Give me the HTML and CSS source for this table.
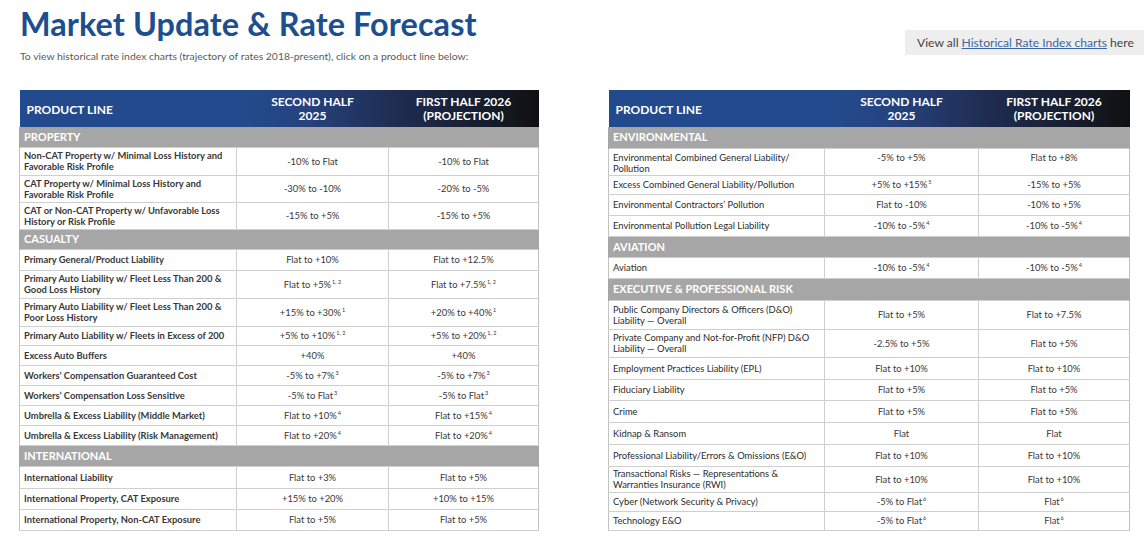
FILE: index.html
```html
<!DOCTYPE html>
<html lang="en">
<head>
<meta charset="utf-8">
<title>Market Update &amp; Rate Forecast</title>
<link rel="stylesheet" href="styles.css">
</head>
<body>
<header class="top">
  <div class="intro">
    <h1 class="title">Market Update &amp; Rate Forecast</h1>
    <p class="subtitle">To view historical rate index charts (trajectory of rates 2018-present), click on a product line below:</p>
  </div>
  <div class="hist-btn">View all&nbsp;<a class="hist-link" href="#">Historical Rate Index charts</a>&nbsp;here</div>
</header>
<main class="tables">
  <table class="rates rates-left">
    <colgroup><col class="c1"><col class="c2"><col class="c3"></colgroup>
    <thead>
      <tr class="head"><th class="th-line">PRODUCT LINE</th><th>SECOND HALF<br>2025</th><th>FIRST HALF 2026<br>(PROJECTION)</th></tr>
    </thead>
    <tbody>
      <tr class="sec h20"><td colspan="3">PROPERTY</td></tr>
      <tr class="row h28"><td>Non-CAT Property w/ Minimal Loss History and<br>Favorable Risk Profile</td><td>-10% to Flat</td><td>-10% to Flat</td></tr>
      <tr class="row h27"><td>CAT Property w/ Minimal Loss History and<br>Favorable Risk Profile</td><td>-30% to -10%</td><td>-20% to -5%</td></tr>
      <tr class="row h27"><td>CAT or Non-CAT Property w/ Unfavorable Loss<br>History or Risk Profile</td><td>-15% to +5%</td><td>-15% to +5%</td></tr>
      <tr class="sec h20"><td colspan="3">CASUALTY</td></tr>
      <tr class="row h21"><td>Primary General/Product Liability</td><td>Flat to +10%</td><td>Flat to +12.5%</td></tr>
      <tr class="row h28"><td>Primary Auto Liability w/ Fleet Less Than 200 &amp;<br>Good Loss History</td><td>Flat to +5%<sup>1, 2</sup></td><td>Flat to +7.5%<sup>1, 2</sup></td></tr>
      <tr class="row h28"><td>Primary Auto Liability w/ Fleet Less Than 200 &amp;<br>Poor Loss History</td><td>+15% to +30%<sup>1</sup></td><td>+20% to +40%<sup>1</sup></td></tr>
      <tr class="row h19"><td>Primary Auto Liability w/ Fleets in Excess of 200</td><td>+5% to +10%<sup>1, 2</sup></td><td>+5% to +20%<sup>1, 2</sup></td></tr>
      <tr class="row h20"><td>Excess Auto Buffers</td><td>+40%</td><td>+40%</td></tr>
      <tr class="row h20"><td>Workers’ Compensation Guaranteed Cost</td><td>-5% to +7%<sup>3</sup></td><td>-5% to +7%<sup>3</sup></td></tr>
      <tr class="row h20"><td>Workers’ Compensation Loss Sensitive</td><td>-5% to Flat<sup>3</sup></td><td>-5% to Flat<sup>3</sup></td></tr>
      <tr class="row h20"><td>Umbrella &amp; Excess Liability (Middle Market)</td><td>Flat to +10%<sup>4</sup></td><td>Flat to +15%<sup>4</sup></td></tr>
      <tr class="row h20"><td>Umbrella &amp; Excess Liability (Risk Management)</td><td>Flat to +20%<sup>4</sup></td><td>Flat to +20%<sup>4</sup></td></tr>
      <tr class="sec h21"><td colspan="3">INTERNATIONAL</td></tr>
      <tr class="row h22"><td>International Liability</td><td>Flat to +3%</td><td>Flat to +5%</td></tr>
      <tr class="row h21"><td>International Property, CAT Exposure</td><td>+15% to +20%</td><td>+10% to +15%</td></tr>
      <tr class="row h21"><td>International Property, Non-CAT Exposure</td><td>Flat to +5%</td><td>Flat to +5%</td></tr>
    </tbody>
  </table>

  <table class="rates rates-right">
    <colgroup><col class="c1r"><col class="c2r"><col class="c3r"></colgroup>
    <thead>
      <tr class="head"><th class="th-line">PRODUCT LINE</th><th>SECOND HALF<br>2025</th><th>FIRST HALF 2026<br>(PROJECTION)</th></tr>
    </thead>
    <tbody>
      <tr class="sec h21"><td colspan="3">ENVIRONMENTAL</td></tr>
      <tr class="row h27 top-al"><td>Environmental Combined General Liability/<br>Pollution</td><td>-5% to +5%</td><td>Flat to +8%</td></tr>
      <tr class="row h19"><td>Excess Combined General Liability/Pollution</td><td>+5% to +15%<sup>5</sup></td><td>-15% to +5%</td></tr>
      <tr class="row h21"><td>Environmental Contractors’ Pollution</td><td>Flat to -10%</td><td>-10% to +5%</td></tr>
      <tr class="row h21"><td>Environmental Pollution Legal Liability</td><td>-10% to -5%<sup>4</sup></td><td>-10% to -5%<sup>4</sup></td></tr>
      <tr class="sec h21"><td colspan="3">AVIATION</td></tr>
      <tr class="row h21"><td>Aviation</td><td>-10% to -5%<sup>4</sup></td><td>-10% to -5%<sup>4</sup></td></tr>
      <tr class="sec h22"><td colspan="3">EXECUTIVE &amp; PROFESSIONAL RISK</td></tr>
      <tr class="row h29"><td>Public Company Directors &amp; Officers (D&amp;O)<br>Liability — Overall</td><td>Flat to +5%</td><td>Flat to +7.5%</td></tr>
      <tr class="row h28"><td>Private Company and Not-for-Profit (NFP) D&amp;O<br>Liability — Overall</td><td>-2.5% to +5%</td><td>Flat to +5%</td></tr>
      <tr class="row h22"><td>Employment Practices Liability (EPL)</td><td>Flat to +10%</td><td>Flat to +10%</td></tr>
      <tr class="row h21"><td>Fiduciary Liability</td><td>Flat to +5%</td><td>Flat to +5%</td></tr>
      <tr class="row h22"><td>Crime</td><td>Flat to +5%</td><td>Flat to +5%</td></tr>
      <tr class="row h22"><td>Kidnap &amp; Ransom</td><td>Flat</td><td>Flat</td></tr>
      <tr class="row h22"><td>Professional Liability/Errors &amp; Omissions (E&amp;O)</td><td>Flat to +10%</td><td>Flat to +10%</td></tr>
      <tr class="row h26"><td>Transactional Risks — Representations &amp;<br>Warranties Insurance (RWI)</td><td>Flat to +10%</td><td>Flat to +10%</td></tr>
      <tr class="row h19"><td>Cyber (Network Security &amp; Privacy)</td><td>-5% to Flat<sup>6</sup></td><td>Flat<sup>6</sup></td></tr>
      <tr class="row h19"><td>Technology E&amp;O</td><td>-5% to Flat<sup>6</sup></td><td>Flat<sup>6</sup></td></tr>
    </tbody>
  </table>
</main>
</body>
</html>
```
FILE: styles.css
```css
html, body {
  margin: 0;
  padding: 0;
  background: #ffffff;
}
body {
  font-family: Lato, "Open Sans", "Liberation Sans", sans-serif;
  color: #333333;
  width: 1144px;
  height: 540px;
  overflow: hidden;
}
.top {
  display: flex;
  justify-content: space-between;
  align-items: flex-start;
  height: 90px;
  padding-left: 20px;
  box-sizing: border-box;
}
.intro {
  padding-top: 3px;
}
.title {
  margin: 0;
  font-family: Lato, "Open Sans", sans-serif;
  font-weight: 700;
  font-size: 32.4px;
  line-height: 42px;
  color: #1d4f8e;
  letter-spacing: 0.1px;
}
.subtitle {
  margin: 5px 0 0 0;
  font-size: 10.4px;
  line-height: 12px;
  color: #5a5a5a;
  font-weight: 400;
}
.hist-btn {
  margin-top: 30px;
  width: 239px;
  height: 25px;
  box-sizing: border-box;
  padding-left: 12px;
  background: #eeeeee;
  display: flex;
  align-items: center;
  font-size: 12.1px;
  color: #444444;
  white-space: nowrap;
}
.hist-link {
  color: #3b66a3;
  text-decoration: underline;
}
.tables {
  display: flex;
  align-items: flex-start;
  gap: 69px;
  padding-left: 19px;
}
.rates {
  border-collapse: collapse;
  table-layout: fixed;
  font-size: 9.4px;
  line-height: 11px;
}
.rates-left { width: 519px; }
.rates-right { width: 521px; }
.c1 { width: 217px; }
.c2 { width: 152px; }
.c3 { width: 150px; }
.c1r { width: 216px; }
.c2r { width: 154px; }
.c3r { width: 151px; }

.head {
  background: linear-gradient(to right, #224a8e 0%, #234a8c 44%, #26427d 55%, #1f2d52 72%, #161c2b 90%, #101010 100%);
}
.head th {
  height: 35px;
  padding: 0;
  color: #ffffff;
  font-size: 12px;
  line-height: 14px;
  font-weight: 700;
  text-align: center;
  vertical-align: middle;
}
.head th.th-line {
  text-align: left;
  padding-left: 7px;
  padding-top: 2px;
}
.sec td {
  background: #a6a6a6;
  color: #ffffff;
  font-weight: 700;
  font-size: 11px;
  line-height: 14px;
  padding: 0 0 0 4px;
  box-sizing: border-box;
  border-left: 1px solid #a6a6a6;
  border-right: 1px solid #a6a6a6;
}
.row td {
  border: 1px solid #cfcfcf;
  padding: 0 4px;
  box-sizing: border-box;
  text-align: center;
  vertical-align: middle;
  color: #383838;
}
.row td:first-child {
  text-align: left;
  border-left: 1px solid #c2c2c2;
}
.row td:last-child {
  border-right: 1px solid #c2c2c2;
}
.rates-left .row td:first-child {
  font-weight: 700;
}
.rates-right .row td:first-child {
  font-weight: 400;
  color: #2c2c2c;
}
.h19 td { height: 19px; }
.h20 td { height: 20px; }
.h21 td { height: 21px; }
.h22 td { height: 22px; }
.h26 td { height: 26px; }
.h27 td { height: 27px; }
.h28 td { height: 28px; }
.h29 td { height: 29px; }
.rates .top-al td { vertical-align: top; padding-top: 3px; }
.rates sup {
  font-size: 5.5px;
  line-height: 0;
  vertical-align: 4px;
  margin-left: 1px;
}
```
